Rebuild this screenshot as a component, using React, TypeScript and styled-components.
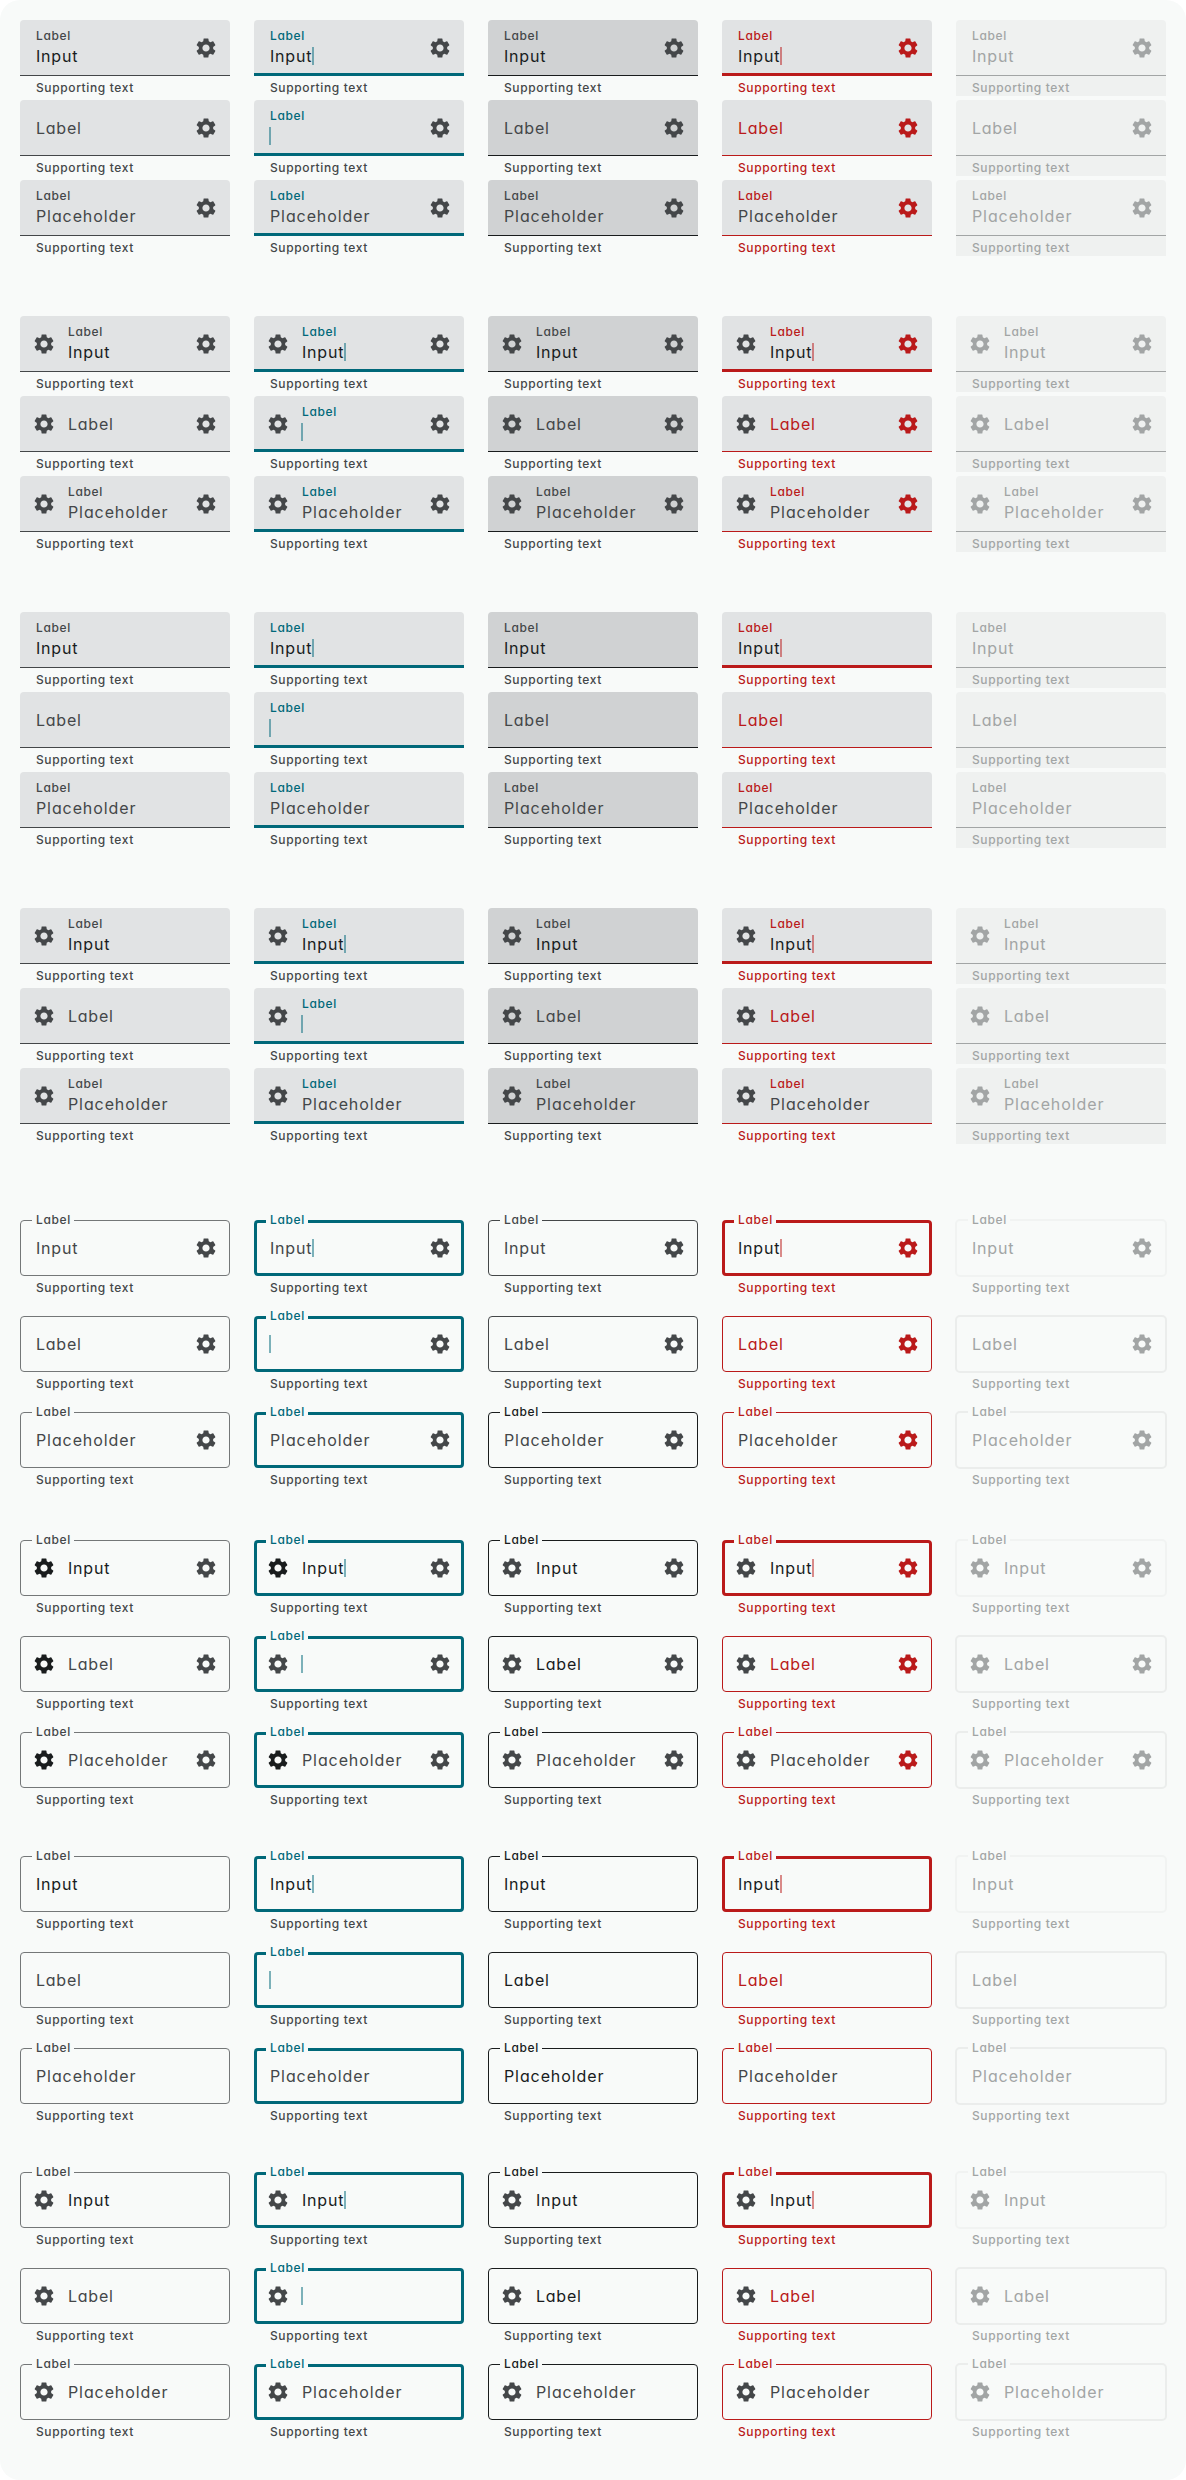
import React from "react";
import styled, { createGlobalStyle, css } from "styled-components";

const ink = "#191c1d";
const muted = "#444749";
const outline = "#747778";
const teal = "#006879";
const red = "#ba1a1a";
const faded = "#a2a5a5";

const GlobalStyle = createGlobalStyle`
  * { box-sizing: border-box; }
  body { margin: 0; background: #fff; }
`;

const Sheet = styled.main`
  width: 1186px;
  height: 2480px;
  padding: 20px;
  border-radius: 20px;
  background: #f8faf9;
  font-family: Inter, "Open Sans", sans-serif;
  font-feature-settings: "cv11", "calt" 0;
`;

const Group = styled.section<{ $outlined: boolean; $top: number }>`
  display: grid;
  grid-template-columns: repeat(5, 210px);
  grid-auto-rows: 76px;
  column-gap: 24px;
  row-gap: ${(p) => (p.$outlined ? 20 : 4)}px;
  margin-top: ${(p) => p.$top}px;
`;

const Field = styled.div<{ $bg?: string }>`
  display: flex;
  flex-direction: column;
  border-radius: 4px 4px 0 0;
  background: ${(p) => p.$bg || "transparent"};
`;

const Box = styled.div<{ $bg: string; $line: string; $thick: number; $outlined: boolean }>`
  position: relative;
  display: flex;
  align-items: center;
  height: 56px;
  padding: 0 12px 0 16px;
  ${(p) =>
    p.$outlined
      ? css`
          border: ${p.$thick}px solid ${p.$line};
          border-radius: 4px;
          padding: 0 ${12 - p.$thick}px 0 ${16 - p.$thick}px;
        `
      : css`
          border-radius: 4px 4px 0 0;
          background: linear-gradient(${p.$line}, ${p.$line}) bottom / 100% ${p.$thick}px no-repeat
            ${p.$bg};
        `}
`;

const DimOutline = styled.span<{ $c: string }>`
  position: absolute;
  inset: -2px;
  border: 2px solid ${(p) => p.$c};
  border-radius: 5px;
`;

const Lead = styled.span`
  display: flex;
  margin: 0 12px 0 -4px;
`;

const Content = styled.div`
  display: flex;
  flex: 1;
  flex-direction: column;
`;

const spacing: Record<string, string> = {
  Label: "0.75px",
  Input: "0.8px",
  Placeholder: "0.9px",
};

const Small = styled.span<{ $c: string }>`
  height: 16px;
  font-size: 12px;
  font-weight: 500;
  line-height: 16px;
  letter-spacing: 0.62px;
  color: ${(p) => p.$c};
`;

const Notch = styled(Small)<{ $thick: number }>`
  position: absolute;
  top: ${(p) => -8 - p.$thick}px;
  left: ${(p) => 12 - p.$thick}px;
  width: 42px;
  padding-left: 4px;
  background: #f8faf9;
`;

const Value = styled.span<{ $c: string; $ls: string }>`
  display: flex;
  align-items: center;
  height: 24px;
  font-size: 16px;
  font-weight: 400;
  line-height: 24px;
  letter-spacing: ${(p) => p.$ls};
  color: ${(p) => p.$c};
`;

const Caret = styled.i<{ $c: string; $empty: boolean }>`
  width: 2px;
  height: 18px;
  margin-left: ${(p) => (p.$empty ? -1 : 0)}px;
  background: ${(p) => p.$c};
  opacity: 0.5;
`;

const Support = styled(Small)`
  height: 20px;
  padding: 4px 16px 0;
`;

const GearSvg = styled.svg<{ $c: string }>`
  flex: none;
  width: 24px;
  height: 24px;
  fill: ${(p) => p.$c};
`;

const Gear = ({ color }: { color: string }) => (
  <GearSvg $c={color} viewBox="0 0 24 24">
    <path d="M19.14 12.94c.04-.3.06-.61.06-.94 0-.32-.02-.64-.07-.94l2.03-1.58a.49.49 0 0 0 .12-.61l-1.92-3.32a.488.488 0 0 0-.59-.22l-2.39.96c-.5-.38-1.03-.7-1.62-.94l-.36-2.54a.484.484 0 0 0-.48-.41h-3.84c-.24 0-.43.17-.47.41l-.36 2.54c-.59.24-1.13.57-1.62.94l-2.39-.96c-.22-.08-.47 0-.59.22L2.74 8.87c-.12.21-.08.47.12.61l2.03 1.58c-.05.3-.09.63-.09.94s.02.64.07.94l-2.03 1.58a.49.49 0 0 0-.12.61l1.92 3.32c.12.22.37.29.59.22l2.39-.96c.5.38 1.03.7 1.62.94l.36 2.54c.05.24.24.41.48.41h3.84c.24 0 .44-.17.47-.41l.36-2.54c.59-.24 1.13-.56 1.62-.94l2.39.96c.22.08.47 0 .59-.22l1.92-3.32c.12-.22.07-.47-.12-.61l-2.01-1.58zM12 15.6c-1.98 0-3.6-1.62-3.6-3.6s1.62-3.6 3.6-3.6 3.6 1.62 3.6 3.6-1.62 3.6-3.6 3.6z" />
  </GearSvg>
);

type State = "enabled" | "focused" | "hovered" | "error" | "disabled";
type GroupSpec = { outlined: boolean; lead: boolean; trail: boolean; top: number };

const states: State[] = ["enabled", "focused", "hovered", "error", "disabled"];

const groups: GroupSpec[] = [
  { outlined: false, lead: false, trail: true, top: 0 },
  { outlined: false, lead: true, trail: true, top: 60 },
  { outlined: false, lead: false, trail: false, top: 60 },
  { outlined: false, lead: true, trail: false, top: 60 },
  { outlined: true, lead: false, trail: true, top: 76 },
  { outlined: true, lead: true, trail: true, top: 52 },
  { outlined: true, lead: false, trail: false, top: 48 },
  { outlined: true, lead: true, trail: false, top: 48 },
];

function TextField({ spec, state, row }: { spec: GroupSpec; state: State; row: number }) {
  const { outlined, lead, trail } = spec;
  const first = outlined && !lead && trail;
  const both = outlined && lead && trail;
  const off = state === "disabled";
  const err = state === "error";
  const focus = state === "focused";
  const hover = state === "hovered";
  const empty = focus && row === 1;
  const floating = row !== 1 || focus;
  const thick = focus || (err && row === 0) ? 3 : 1;

  let line = outlined ? outline : muted;
  if (focus) line = teal;
  if (err) line = red;
  if (hover) line = first && row < 2 ? muted : ink;
  if (off) line = outlined ? "transparent" : faded;

  let label = muted;
  if (focus) label = teal;
  if (err) label = red;
  if (off) label = faded;
  if (hover && outlined && !(first && row < 2)) label = ink;

  let value = row === 0 ? ink : muted;
  if (first && row === 0 && !err) value = muted;
  if (err && row === 1) value = red;
  if (hover && outlined && !first && row === 1) value = ink;
  if (hover && outlined && !lead && !trail) value = ink;
  if (off) value = faded;

  let leadColor = off ? faded : muted;
  if (both && (state === "enabled" || (focus && row !== 1))) leadColor = ink;
  const trailColor = off ? faded : err ? red : muted;

  const bg = off ? "transparent" : hover ? "#d0d2d3" : "#e1e3e4";
  const text = empty ? "" : ["Input", "Label", "Placeholder"][row];
  const caret = empty || (row === 0 && (focus || err));

  return (
    <Field $bg={off && !outlined ? "#eff1f0" : undefined}>
      <Box $bg={bg} $line={line} $thick={thick} $outlined={outlined}>
        {off && outlined && <DimOutline $c={row === 0 ? "#f1f3f2" : "#ebedec"} />}
        {outlined && floating && (
          <Notch $c={label} $thick={thick}>
            Label
          </Notch>
        )}
        {lead && (
          <Lead>
            <Gear color={leadColor} />
          </Lead>
        )}
        <Content>
          {!outlined && floating && <Small $c={label}>Label</Small>}
          <Value $c={value} $ls={spacing[text] || "0"}>
            {text}
            {caret && <Caret $c={err ? red : teal} $empty={empty} />}
          </Value>
        </Content>
        {trail && <Gear color={trailColor} />}
      </Box>
      <Support $c={off ? faded : err ? red : muted}>Supporting text</Support>
    </Field>
  );
}

export default function App() {
  return (
    <>
      <GlobalStyle />
      <Sheet>
        {groups.map((spec, g) => (
          <Group key={g} $outlined={spec.outlined} $top={spec.top}>
            {[0, 1, 2].map((row) =>
              states.map((state) => (
                <TextField key={state + row} spec={spec} state={state} row={row} />
              ))
            )}
          </Group>
        ))}
      </Sheet>
    </>
  );
}
